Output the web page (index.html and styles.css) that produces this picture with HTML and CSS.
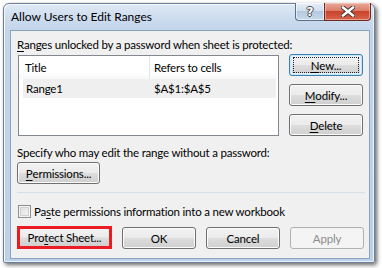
FILE: index.html
```html
<!DOCTYPE html>
<html>
<head>
<meta charset="utf-8">
<link rel="stylesheet" href="styles.css">
</head>
<body>
<div class="window">
  <div class="titlebar">
    <span class="title">Allow Users to Edit Ranges</span>
    <div class="caption">
      <div class="cap help"><span class="q">?</span></div>
      <div class="cap close">
        <svg width="14" height="11" viewBox="0 0 14 11">
          <path d="M2 1.5 L12 9.5 M12 1.5 L2 9.5" stroke="#3d3d3d" stroke-width="4.4" stroke-linecap="square" fill="none"/>
          <path d="M2 1.5 L12 9.5 M12 1.5 L2 9.5" stroke="#ffffff" stroke-width="2.4" stroke-linecap="square" fill="none"/>
        </svg>
      </div>
    </div>
  </div>
  <div class="client">
    <div class="label top-label"><u>R</u>anges unlocked by a password when sheet is protected:</div>
    <div class="main-row">
      <div class="listbox">
        <div class="lhead">
          <div class="c1">Title</div>
          <div class="c2">Refers to cells</div>
        </div>
        <div class="lrow">
          <div class="c1">Range1</div>
          <div class="c2">$A$1:$A$5</div>
        </div>
      </div>
      <div class="side">
        <div class="btn default"><span class="focus"><u>N</u>ew...</span></div>
        <div class="btn"><u>M</u>odify...</div>
        <div class="btn"><u>D</u>elete</div>
      </div>
    </div>
    <div class="label specify">Specify who may edit the range without a password:</div>
    <div class="btn perm"><u>P</u>ermissions...</div>
    <div class="sep"></div>
    <div class="check-row">
      <span class="checkbox"></span>
      <span class="label">Pa<u>s</u>te permissions information into a new workbook</span>
    </div>
    <div class="bottom-row">
      <div class="btn protect">Pro<u>t</u>ect Sheet...</div>
      <div class="btn">OK</div>
      <div class="btn">Cancel</div>
      <div class="btn disabled">Apply</div>
    </div>
  </div>
</div>
</body>
</html>
```

FILE: styles.css
```css
html, body {
  margin: 0;
  padding: 0;
  background: #ffffff;
}
body {
  width: 382px;
  height: 268px;
  overflow: hidden;
  font-family: "Lato", "Open Sans", sans-serif;
  font-size: 11.5px;
  letter-spacing: -0.2px;
  color: #000;
}
u { text-decoration: underline; text-underline-offset: 2px; }

.window {
  margin: 3px 0 0 3px;
  width: 372px;
  height: 260px;
  box-sizing: border-box;
  padding: 0 4px 3px 6px;
  border: 1px solid #6b7f99;
  border-radius: 6px 6px 2px 2px;
  background: linear-gradient(#dfe9f5 0px, #cddcee 14px, #c2d5eb 28px, #bcd1ea 100%);
  box-shadow: inset 1px 1px 0 #f4f8fc, inset -1px -1px 0 #eaf1f9, 2px 2px 4px rgba(0,0,0,0.6);
  display: flex;
  flex-direction: column;
}

.titlebar {
  height: 26px;
  display: flex;
  align-items: flex-start;
  justify-content: space-between;
  flex-shrink: 0;
}
.title {
  margin-top: 5px;
  margin-left: 1px;
  font-size: 12px;
  letter-spacing: 0;
  line-height: 16px;
  color: #000;
}
.caption {
  display: flex;
  margin-right: -1px;
  margin-top: -1px;
}
.cap {
  box-sizing: border-box;
  height: 18px;
  border: 1px solid #5b6d87;
  border-top: none;
  display: flex;
  align-items: center;
  justify-content: center;
}
.help {
  width: 29px;
  border-right: none;
  border-radius: 0 0 0 4px;
  background: linear-gradient(#e6eef8 0%, #d2dfee 45%, #b7c9df 50%, #c7d8eb 100%);
  box-shadow: inset 0 0 0 1px rgba(255,255,255,0.6);
}
.q {
  font-family: "DejaVu Sans", sans-serif;
  font-weight: bold;
  font-size: 12px;
  line-height: 12px;
  letter-spacing: 0;
  color: #fff;
  text-shadow: -1px 0 #4a4a4a, 1px 0 #4a4a4a, 0 -1px #4a4a4a, 0 1px #4a4a4a;
}
.close {
  width: 47px;
  border-radius: 0 0 4px 0;
  border-color: #6e2a22;
  background: linear-gradient(#e9a99c 0%, #dc7d6a 45%, #c8442c 50%, #d7634c 100%);
  box-shadow: inset 0 0 0 1px rgba(255,220,210,0.5);
}
.close svg { display: block; }

.client {
  flex: 1;
  background: #f0f0f0;
  border: 1px solid #8da1b9;
  padding: 6px 6px 0 6px;
  display: flex;
  flex-direction: column;
}

.label {
  line-height: 15px;
  white-space: nowrap;
}

.main-row {
  display: flex;
  margin-top: 2px;
  gap: 10px;
}

.listbox {
  box-sizing: border-box;
  margin-left: 1px;
  margin-top: 1px;
  width: 262px;
  height: 81px;
  background: #fff;
  border: 1px solid #828790;
}
.lhead {
  display: flex;
  height: 23px;
  align-items: center;
  background: linear-gradient(#ffffff 0%, #ffffff 70%, #f7f8f9 100%);
}
.lhead .c1 {
  padding-left: 6px;
  height: 23px;
  line-height: 23px;
  border-right: 1px solid #e2e5ea;
  box-sizing: border-box;
  width: 131px;
}
.lhead .c2 {
  padding-left: 4px;
  line-height: 23px;
}
.lrow {
  display: flex;
  margin: 0 2px 0 4px;
  height: 19px;
  line-height: 19px;
  background: #efefef;
}
.lrow .c1 {
  width: 127px;
  padding-left: 3px;
  box-sizing: border-box;
}
.lrow .c2 {
  padding-left: 4px;
}

.side {
  display: flex;
  flex-direction: column;
  gap: 8px;
}

.btn {
  box-sizing: border-box;
  width: 74px;
  height: 22px;
  border: 1px solid #707070;
  border-radius: 3px;
  background: linear-gradient(#f2f2f2 0%, #ebebeb 48%, #dddddd 52%, #cfcfcf 100%);
  box-shadow: inset 0 0 0 1px #fbfbfb;
  display: flex;
  align-items: center;
  justify-content: center;
  line-height: 15px;
  white-space: nowrap;
  flex-shrink: 0;
}
.btn.default {
  border-color: #3c7fb1;
  box-shadow: inset 0 0 0 1px #c7e6f8, inset 0 0 0 2px #e2f1fb;
}
.focus {
  box-sizing: border-box;
  width: 66px;
  height: 16px;
  border: 1px dotted #222;
  display: flex;
  align-items: center;
  justify-content: center;
}
.btn.disabled {
  border-color: #adb2b5;
  background: #f4f4f4;
  box-shadow: none;
  color: #8d8d8d;
}

.specify {
  margin-top: 9px;
}
.perm {
  width: 83px;
  margin-top: 2px;
}

.sep {
  height: 1px;
  margin: 8px 0 0 0;
  width: 348px;
  background: #d5dfe5;
}

.check-row {
  display: flex;
  align-items: center;
  margin-top: 11px;
  height: 15px;
}
.checkbox {
  box-sizing: border-box;
  width: 13px;
  height: 13px;
  margin-left: 1px;
  margin-right: 3px;
  border: 1px solid #8e8f8f;
  background: linear-gradient(135deg, #dcdcdc 0%, #f6f6f6 100%);
  box-shadow: inset 0 0 0 1px #f4f4f4, inset 0 0 0 2px #cfcfcf;
}

.bottom-row {
  display: flex;
  gap: 10px;
  margin-top: 8px;
}
.btn.protect {
  width: 95px;
  height: 23px;
  border: 3px solid #ec1c24;
  border-radius: 0;
  box-shadow: none;
  background: linear-gradient(#f2f2f2 0%, #ebebeb 48%, #dddddd 52%, #cfcfcf 100%);
  margin-top: -1px;
}
```
